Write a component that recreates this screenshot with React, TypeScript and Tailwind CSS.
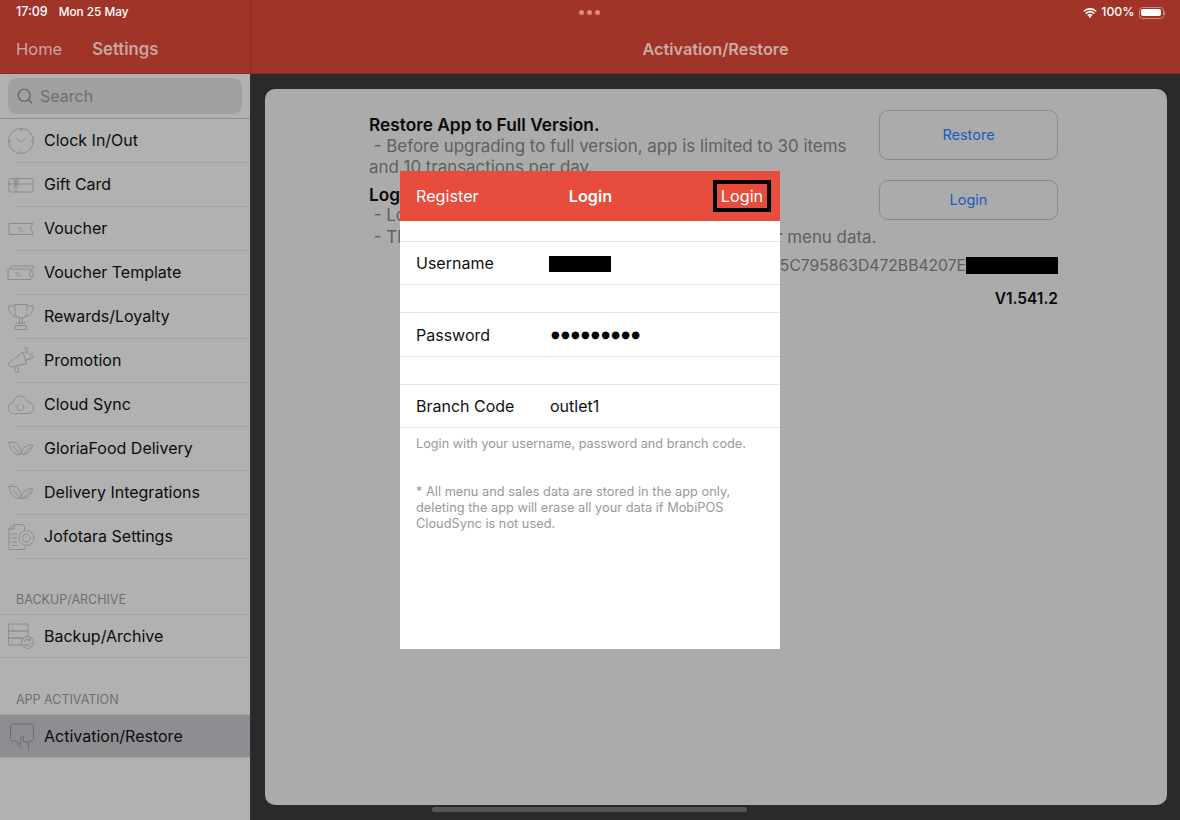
import React from 'react';
import { Search } from 'lucide-react';

const ink = { fill: 'none', stroke: '#8c8c8c', strokeWidth: 1, strokeLinecap: 'round', strokeLinejoin: 'round' } as const;

function Icon({ children, dark }: { children: React.ReactNode; dark?: boolean }) {
  return (
    <svg width="28" height="28" viewBox="0 0 28 28" className="shrink-0" {...ink} stroke={dark ? '#6c6c70' : '#8c8c8c'}>
      {children}
    </svg>
  );
}

const ClockIcon = () => (
  <Icon>
    <circle cx="14" cy="14" r="12.5" />
    <path d="M14 1.5v2.5M14 24v2.5M1.5 14H4M24 14h2.5M9.500 11.500 14 15.500l5-5" />
  </Icon>
);
const GiftIcon = () => (
  <Icon>
    <rect x="2" y="7.500" width="24" height="13.500" rx="1" />
    <path d="M2 13h24M9 7.500V21M9 13c-4-1.500-3.500-4.500-1.500-4.300 1 .1 1.500 1.800 1.500 4.300 0-2.500.5-4.200 1.500-4.300 2-.2 2.500 2.800-1.500 4.300ZM9 13l-2.500 3.500M9 13l2.500 3.500" />
  </Icon>
);
const VoucherIcon = () => (
  <Icon>
    <path d="M2.500 8.500h23.500l-1.500 2.500c-1 1-1 3 0 4l1.500 4.500H2.500Z" />
    <text x="10.500" y="16.500" fontSize="6.500" fill="#8c8c8c" stroke="none">%</text>
  </Icon>
);
const TemplateIcon = () => (
  <Icon>
    <path d="M4 8.500V7h22.500l-.5 2.500c-1.500 1-1.500 4 0 5l.5 3h-2" />
    <path d="M1.500 10h22.500l-.5 2.500c-1.500 1-1.500 4 0 5l.5 3H1.500Z" />
    <text x="8" y="18" fontSize="6.500" fill="#8c8c8c" stroke="none">%</text>
  </Icon>
);
const TrophyIcon = () => (
  <Icon>
    <path d="M8 1.500h12v7c0 4-2.500 6.500-6 6.500S8 12.500 8 8.500ZM8 3H1.500c0 5 2.500 9.500 8.500 11M20 3h6.500c0 5-2.500 9.500-8.500 11" />
    <path d="M12.500 15v5h3v-5M10 20h8M8.500 22.500h11v4h-11Z" />
  </Icon>
);
const PromoIcon = () => (
  <Icon>
    <path d="M1.500 17c0-1 .5-1.500 1.500-2L16 5l3.500 11.500L4.500 20c-2 .3-3-1.500-3-3Z" />
    <path d="M7 19.500l2 6 3-1-1.500-5.500M19 13l6-1.500" />
    <text x="17" y="6" fontSize="7" fill="#8c8c8c" stroke="none">$</text>
    <text x="21.500" y="11" fontSize="6" fill="#8c8c8c" stroke="none">%</text>
  </Icon>
);
const CloudIcon = () => (
  <Icon>
    <path d="M7 22.500c-3.500 0-6-2.500-6-5.500 0-3 2.500-5 5-5 1-4.500 4-7 7-7 4 0 6.500 2.500 7.500 6 3 0 6 2.500 6 6 0 3.500-2.500 5.500-6 5.500Z" />
    <path d="M16.500 14.500a3.500 3.500 0 1 1-5-1" />
  </Icon>
);
const LeafIcon = () => (
  <Icon>
    <path d="M2 7.500c6-1.500 10.500 1 12 9 .3 2-.5 3-1.500 3C7 19.500 3 15 2 7.500Z" />
    <path d="M25.500 10c-5-.5-9 1.500-10.500 6.500-.5 2-.5 2.700.5 3 5 0 9-3.500 10-9.500ZM6 11l7.500 8.500M23 12.500l-7 7" />
  </Icon>
);
const DocIcon = () => (
  <Icon>
    <path d="M7 1.500h9l1.500 2.500v3M7 1.500 2 6v20.500h16v-2M2 6h5V1.500" />
    <path d="M5 11h5M5 15h5M5 19h5M5 22.500h5" />
    <circle cx="19.500" cy="15" r="7.500" />
    <circle cx="19.500" cy="15" r="4" />
  </Icon>
);
const BackupIcon = () => (
  <Icon>
    <path d="M2 2h19v7H2ZM2 9h19v7H2ZM2 16h13v7H2ZM5 5.500h.5M5 12.500h.5M5 19.500h.5" />
    <circle cx="20.500" cy="20.500" r="6" fill="#b1b1b1" />
    <path d="M17.500 20a3 3 0 0 1 5.500-1.500M23.500 21a3 3 0 0 1-5.500 1.500M23 16.500v2h-2M18 24.500v-2h2" />
  </Icon>
);
const TouchIcon = () => (
  <Icon dark>
    <path d="M9 19H5c-1.500 0-2.500-1-2.500-2.500V4.500C2.500 3 3.500 2 5 2h18c1.500 0 2.500 1 2.500 2.500v12c0 1.500-1 2.500-2.500 2.500h-2" />
    <path d="M14 27 9.500 22.500c-.7-1 .5-2 1.500-1.300l2 1.500V15c0-1.500 2.500-1.500 2.500 0v4.500l5 1V27" />
  </Icon>
);

function Row({ icon, label }: { icon: React.ReactNode; label: string }) {
  return (
    <div className="ml-4 h-11 flex items-center border-b border-[#a1a1a1]">
      <div className="-ml-[9px]">{icon}</div>
      <span className="ml-[9px] mb-[1px] text-[16px] text-[#0c0c0c]">{label}</span>
    </div>
  );
}

function Field({ label, children, tall }: { label: string; children: React.ReactNode; tall?: boolean }) {
  return (
    <div className={`${tall ? 'h-[45px]' : 'h-11'} flex items-center border-y border-[#e6e6e6] pl-4 text-[16px] text-[#111]`}>
      <span className="w-[134px]">{label}</span>
      {children}
    </div>
  );
}

export default function App() {
  return (
    <div className="relative w-[1180px] h-[820px] overflow-hidden bg-[#2a2a2a] font-['Inter',sans-serif] flex flex-col">
      {/* top bar */}
      <header className="h-[74px] shrink-0 flex bg-[#a13428] border-b border-[#8f2a20]">
        <div className="w-[251px] shrink-0 border-r border-[#8f2a20] px-4">
          <div className="h-6 pt-[1px] flex items-center gap-[11px] text-[12.500px] font-medium text-white">
            <span>17:09</span>
            <span className="text-[11.800px]">Mon 25 May</span>
          </div>
          <div className="mt-[13px] flex gap-[30px] text-[16.500px] text-[#c9a5a0]">
            <span>Home</span>
            <span className="font-semibold text-[16.700px]">Settings</span>
          </div>
        </div>
        <div className="flex-1 relative px-4">
          <div className="h-6 pt-[1px] flex items-center justify-end gap-[4px] text-[12.300px] font-medium text-white">
            <svg width="14" height="11" viewBox="0 0 16 12" fill="none" stroke="white" strokeWidth="1.800" strokeLinecap="round">
              <path d="M1.500 4.300c3.700-3.300 9.300-3.300 13 0M3.800 6.800c2.400-2 6-2 8.400 0M6.100 9c1.100-.8 2.700-.8 3.800 0" />
              <circle cx="8" cy="10.500" r=".6" fill="white" />
            </svg>
            <span>100%</span>
            <div className="flex items-center -mr-[1px]">
              <div className="w-[25px] h-[12px] rounded-[3.500px] border border-[#c88c85] p-[1.500px]">
                <div className="w-full h-full bg-white rounded-[2px]" />
              </div>
              <div className="w-[1.500px] h-[4px] bg-[#c88c85] rounded-r" />
            </div>
          </div>
          <div className="mt-[13px] text-center text-[16.300px] font-semibold text-[#cbaaa5]">Activation/Restore</div>
        </div>
      </header>

      <div className="flex-1 flex min-h-0">
        {/* sidebar */}
        <aside className="w-[250px] shrink-0 bg-[#b1b1b1] flex flex-col">
          <div className="h-[45px] shrink-0 px-2 pt-1 border-b border-[#8d8d8d]">
            <div className="h-9 rounded-[9px] bg-[#a0a0a0] flex items-center pl-2 gap-[6px] text-[16px] text-[#6e6e6e]">
              <Search size={18} strokeWidth={1.600} className="text-[#626262]" />
              <span>Search</span>
            </div>
          </div>
          <Row icon={<ClockIcon />} label="Clock In/Out" />
          <Row icon={<GiftIcon />} label="Gift Card" />
          <Row icon={<VoucherIcon />} label="Voucher" />
          <Row icon={<TemplateIcon />} label="Voucher Template" />
          <Row icon={<TrophyIcon />} label="Rewards/Loyalty" />
          <Row icon={<PromoIcon />} label="Promotion" />
          <Row icon={<CloudIcon />} label="Cloud Sync" />
          <Row icon={<LeafIcon />} label="GloriaFood Delivery" />
          <Row icon={<LeafIcon />} label="Delivery Integrations" />
          <Row icon={<DocIcon />} label="Jofotara Settings" />

          <div className="h-[56px] shrink-0 flex items-end pl-4 pb-[4px] text-[12.500px] text-[#6f6f6f] border-b border-[#a1a1a1]">BACKUP/ARCHIVE</div>
          <div className="h-[43px] flex items-center pl-[7px] border-b border-[#a1a1a1]">
            <BackupIcon />
            <span className="ml-[9px] text-[16px] text-[#0c0c0c]">Backup/Archive</span>
          </div>
          <div className="h-[56px] shrink-0 flex items-end pl-4 pb-[4px] text-[12.500px] text-[#6f6f6f]">APP ACTIVATION</div>
          <div className="h-11 flex items-center pl-[8px] bg-[#8e8e92] border-y border-[#a1a1a1]">
            <TouchIcon />
            <span className="ml-[8px] mb-[1px] text-[16px] text-[#0c0c0c]">Activation/Restore</span>
          </div>
        </aside>

        {/* content behind the dialog */}
        <main className="flex-1 border-l border-[#2f2f2f] pl-[14px] pr-[13px] pt-[15px]">
          <div className="h-[716px] rounded-[10px] bg-[#ababab] pl-[104px] pr-[109px] pt-[21px]">
            <div className="flex justify-between">
              <div className="w-[500px] pt-[4px] text-[16.900px] leading-[21px] text-[#5f5f5f]">
                <div className="font-semibold text-[17.300px] text-[#0a0a0a]">Restore App to Full Version.</div>
                <div className="mt-[1px] whitespace-pre"> - Before upgrading to full version, app is limited to 30 items</div>
                <div>and 10 transactions per day.</div>
                <div className="mt-[6px] font-semibold text-[17.300px] text-[#0a0a0a]">Login</div>
                <div className="whitespace-pre"> - Login to activate the app on this device.</div>
                <div className="mt-[1px] whitespace-pre"> - This will restore your full version and sales and/or menu data.</div>
              </div>
              <div className="w-[179px] shrink-0 flex flex-col gap-5">
                <button className="h-[50px] rounded-[9px] border border-[#8a8a8a] text-[14.500px] text-[#1a5cbf]">Restore</button>
                <button className="h-10 rounded-[9px] border border-[#8a8a8a] text-[14.500px] text-[#1a5cbf]">Login</button>
              </div>
            </div>
            <div className="mt-[6px] flex justify-end items-center text-[15.700px] text-[#5f5f5f]">
              <span>ID: 5C795863D472BB4207E</span>
              <span className="w-[92px] h-[17px] bg-black" />
            </div>
            <div className="mt-[9px] text-right text-[15.500px] font-semibold text-[#0a0a0a]">V1.541.2</div>
          </div>
        </main>
      </div>

      {/* multitasking dots and home indicator */}
      <div className="absolute top-[10px] left-[579px] flex gap-[3px]">
        <span className="w-[5px] h-[5px] rounded-full bg-[#dc8a80]" />
        <span className="w-[5px] h-[5px] rounded-full bg-[#dc8a80]" />
        <span className="w-[5px] h-[5px] rounded-full bg-[#dc8a80]" />
      </div>
      <div className="absolute left-[432px] top-[807px] w-[315px] h-[5px] rounded-full bg-[#555555]" />

      {/* login dialog */}
      <div className="absolute left-[400px] top-[171px] w-[380px] h-[478px] bg-white">
        <div className="h-[50px] bg-[#e74c3c] flex items-center justify-between pl-4 pr-[9px] text-[16.200px] text-white relative">
          <span>Register</span>
          <span className="absolute left-[1px] right-0 text-center font-semibold pointer-events-none">Login</span>
          <span className="h-8 w-[58px] flex items-center justify-center border-[4px] border-black">Login</span>
        </div>
        <div className="h-5" />
        <Field label="Username">
          <span className="-ml-[1px] mt-[2px] w-[62px] h-[16px] bg-black" />
        </Field>
        <div className="h-[27px]" />
        <Field label="Password" tall>
          <span className="ml-[1px] font-['DejaVu_Sans',sans-serif] text-[10px] tracking-[1.300px] text-black">●●●●●●●●●</span>
        </Field>
        <div className="h-[27px]" />
        <Field label="Branch Code">
          <span>outlet1</span>
        </Field>
        <div className="px-4 pt-2 text-[12.700px] leading-4 text-[#999999]">
          <div>Login with your username, password and branch code.</div>
          <div className="mt-8 text-[12.800px]">
            * All menu and sales data are stored in the app only,<br />
            deleting the app will erase all your data if MobiPOS<br />
            CloudSync is not used.
          </div>
        </div>
      </div>
    </div>
  );
}
